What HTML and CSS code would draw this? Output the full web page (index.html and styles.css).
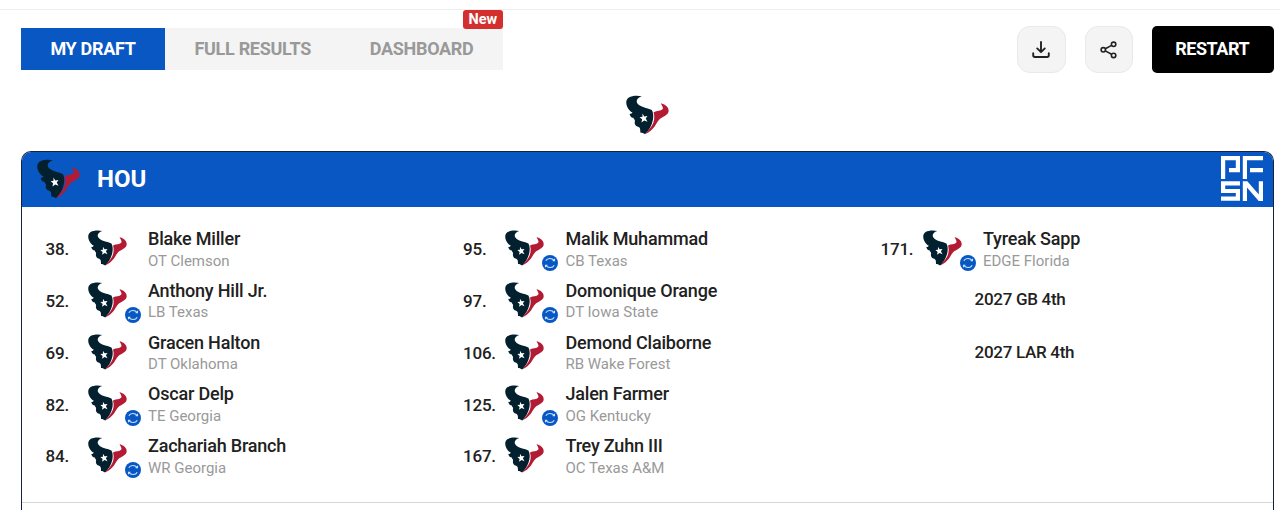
FILE: index.html
```html
<!DOCTYPE html>
<html lang="en">
<head>
    <meta charset="UTF-8">
    <meta name="viewport" content="width=device-width, initial-scale=1.0">
    <title>Mock Draft Results</title>
    <link rel="stylesheet" href="styles.css">
</head>
<body>
    <svg class="sprite" width="0" height="0">
        <symbol id="hou" viewBox="0 0 120 108">
            <path fill="#03202f" d="M44 2C32 -1 17 0 8 5C0 10 -1 20 3 30C7 39 12 44 18 47C16 50 14 51 10 51C12 58 16 62 21 62C21 66 25 67 25 71C23 77 25 84 32 86C40 89 40 92 40 103C45 103 49 105 53 108C63 98 72 84 75 68C77 57 76 47 72 40C60 34 46 33 36 26C26 19 28 7 44 2Z"/>
            <path fill="#b31b34" d="M97 21C101 29 105 34 102 38C97 43 87 42 77 46C81 60 79 73 72 84C67 92 60 99 54 107C64 103 73 95 80 86C86 77 90 68 97 63C107 58 118 53 119 43C120 32 108 23 97 21Z"/>
            <path fill="#fff" d="M46 50L51 58L60 57L55 64L60 73L51 69L43 75L45 66L38 60L46 59Z"/>
        </symbol>
        <symbol id="trade" viewBox="0 0 16 16">
            <circle cx="8" cy="8" r="8" fill="#0857c3"/>
            <path fill="none" stroke="#c5e5ff" stroke-width="1.1" d="M3.8 5.8C5.3 2.8 10 2.6 12.1 5.6M12.5 3.8V5.8H10.6M12.2 10.2C10.7 13.2 6 13.4 3.9 10.4M3.5 12.2V10.2H5.4"/>
        </symbol>
    </svg>

    <div class="top-line"></div>
    <div class="container">
        <div class="toolbar">
            <div class="tabs">
                <button class="tab active">MY DRAFT</button>
                <button class="tab">FULL RESULTS</button>
                <button class="tab">DASHBOARD<span class="new">New</span></button>
            </div>
            <div class="actions">
                <button class="icon-btn" aria-label="Download">
                    <svg width="18" height="18" viewBox="0 0 18 18" fill="none" stroke="#222" stroke-width="1.9" stroke-linecap="round" stroke-linejoin="round"><path d="M9 1V11M5.2 7.4L9 11.2L12.8 7.4M1.2 12.3V14.3Q1.2 16 2.9 16H15.1Q16.8 16 16.8 14.3V12.3"/></svg>
                </button>
                <button class="icon-btn" aria-label="Share">
                    <svg width="18" height="18" viewBox="0 0 18 18" fill="none" stroke="#222" stroke-width="1.6"><circle cx="3.3" cy="8.8" r="2.2"/><circle cx="13.6" cy="3.3" r="2.2"/><circle cx="13.6" cy="14.4" r="2.2"/><path d="M5.3 7.7L11.6 4.4M5.3 9.9L11.6 13.3"/></svg>
                </button>
                <button class="restart">RESTART</button>
            </div>
        </div>

        <div class="team-picker"><svg class="logo"><use href="#hou"/></svg></div>

        <div class="card">
            <div class="card-header">
                <svg class="logo"><use href="#hou"/></svg>
                <h2>HOU</h2>
                <svg class="brand" width="42" height="45" viewBox="0 0 42 45" fill="none" stroke="#fff" stroke-width="4.2">
                    <path d="M2.1 23V2.1H16.9V14.2H8M23.9 23V2.1H42M29 14.2H42"/>
                    <path d="M19 27.3H2.1V35H16.9V42.7H0M23.9 45V25.2M39.9 45V25.2M24.5 26.5L39.3 43.5"/>
                </svg>
            </div>
            <div class="picks">
                <div class="column">
                    <div class="pick">
                        <span class="number">38.</span>
                        <div class="team"><svg class="logo"><use href="#hou"/></svg></div>
                        <div class="player"><div class="name">Blake Miller</div><div class="school">OT Clemson</div></div>
                    </div>
                    <div class="pick">
                        <span class="number">52.</span>
                        <div class="team"><svg class="logo"><use href="#hou"/></svg><svg class="trade"><use href="#trade"/></svg></div>
                        <div class="player"><div class="name">Anthony Hill Jr.</div><div class="school">LB Texas</div></div>
                    </div>
                    <div class="pick">
                        <span class="number">69.</span>
                        <div class="team"><svg class="logo"><use href="#hou"/></svg></div>
                        <div class="player"><div class="name">Gracen Halton</div><div class="school">DT Oklahoma</div></div>
                    </div>
                    <div class="pick">
                        <span class="number">82.</span>
                        <div class="team"><svg class="logo"><use href="#hou"/></svg><svg class="trade"><use href="#trade"/></svg></div>
                        <div class="player"><div class="name">Oscar Delp</div><div class="school">TE Georgia</div></div>
                    </div>
                    <div class="pick">
                        <span class="number">84.</span>
                        <div class="team"><svg class="logo"><use href="#hou"/></svg><svg class="trade"><use href="#trade"/></svg></div>
                        <div class="player"><div class="name">Zachariah Branch</div><div class="school">WR Georgia</div></div>
                    </div>
                </div>
                <div class="column">
                    <div class="pick">
                        <span class="number">95.</span>
                        <div class="team"><svg class="logo"><use href="#hou"/></svg><svg class="trade"><use href="#trade"/></svg></div>
                        <div class="player"><div class="name">Malik Muhammad</div><div class="school">CB Texas</div></div>
                    </div>
                    <div class="pick">
                        <span class="number">97.</span>
                        <div class="team"><svg class="logo"><use href="#hou"/></svg><svg class="trade"><use href="#trade"/></svg></div>
                        <div class="player"><div class="name">Domonique Orange</div><div class="school">DT Iowa State</div></div>
                    </div>
                    <div class="pick">
                        <span class="number">106.</span>
                        <div class="team"><svg class="logo"><use href="#hou"/></svg></div>
                        <div class="player"><div class="name">Demond Claiborne</div><div class="school">RB Wake Forest</div></div>
                    </div>
                    <div class="pick">
                        <span class="number">125.</span>
                        <div class="team"><svg class="logo"><use href="#hou"/></svg><svg class="trade"><use href="#trade"/></svg></div>
                        <div class="player"><div class="name">Jalen Farmer</div><div class="school">OG Kentucky</div></div>
                    </div>
                    <div class="pick">
                        <span class="number">167.</span>
                        <div class="team"><svg class="logo"><use href="#hou"/></svg></div>
                        <div class="player"><div class="name">Trey Zuhn III</div><div class="school">OC Texas A&amp;M</div></div>
                    </div>
                </div>
                <div class="column">
                    <div class="pick">
                        <span class="number">171.</span>
                        <div class="team"><svg class="logo"><use href="#hou"/></svg><svg class="trade"><use href="#trade"/></svg></div>
                        <div class="player"><div class="name">Tyreak Sapp</div><div class="school">EDGE Florida</div></div>
                    </div>
                    <div class="future">2027 GB 4th</div>
                    <div class="future">2027 LAR 4th</div>
                </div>
            </div>
            <div class="card-footer"></div>
        </div>
    </div>
</body>
</html>
```

FILE: styles.css
```css
* {
    box-sizing: border-box;
}
body {
    font-family: Roboto, Arial, sans-serif;
    margin: 0;
    height: 510px;
    overflow: hidden;
    background-color: #fff;
    color: #212121;
}
svg {
    display: block;
}
.sprite {
    position: absolute;
}
.top-line {
    height: 10px;
    border-bottom: 1px solid #eee;
}
.container {
    padding: 16px 6.5px 0 21px;
}
button {
    font-family: inherit;
    border: none;
    padding: 0;
    cursor: pointer;
}
.toolbar {
    display: flex;
    justify-content: space-between;
    height: 47px;
}
.tabs {
    display: flex;
    height: 42px;
    margin-top: 2.4px;
}
.tab {
    position: relative;
    padding: 0 29.4px 2px;
    font-size: 18px;
    font-weight: 700;
    letter-spacing: -0.3px;
    background-color: #f4f4f4;
    color: #999;
}
.tab.active {
    background-color: #0857c3;
    color: #fff;
}
.new {
    position: absolute;
    top: -18px;
    right: 0;
    width: 40px;
    height: 19px;
    border-radius: 3px;
    background-color: #d32f2f;
    color: #fff;
    font-size: 14.5px;
    line-height: 19px;
    letter-spacing: 0;
}
.actions {
    display: flex;
    gap: 19px;
}
.icon-btn {
    display: flex;
    align-items: center;
    justify-content: center;
    width: 48.5px;
    height: 47px;
    border: 1px solid #e9e9e9;
    border-radius: 13px;
    background-color: #f4f4f4;
}
.restart {
    width: 121.5px;
    height: 47px;
    padding: 0 1px 2px 0;
    border-radius: 5px;
    background-color: #000;
    color: #fff;
    font-size: 18px;
    font-weight: 700;
    letter-spacing: -0.45px;
}
.team-picker {
    display: flex;
    justify-content: center;
    height: 78px;
    padding-top: 22px;
}
.team-picker .logo,
.card-header .logo {
    width: 43px;
    height: 40px;
}
.card {
    border: 1px solid #17233a;
    border-bottom: none;
    border-radius: 10px 10px 0 0;
    height: 380px;
    overflow: hidden;
}
.card-header {
    display: flex;
    align-items: center;
    height: 55px;
    padding: 0 10px 2px 15px;
    background-color: #0857c3;
    color: #fff;
}
.card-header h2 {
    margin: 0 0 0 17px;
    font-size: 24px;
    font-weight: 700;
}
.brand {
    margin-left: auto;
}
.picks {
    display: grid;
    grid-template-columns: repeat(3, 417.5px);
    height: 295px;
    padding: 17px 0 0 23.6px;
}
.pick {
    display: flex;
    height: 51.75px;
}
.number {
    width: 42px;
    padding-top: 14.3px;
    font-size: 17px;
    font-weight: 500;
    line-height: 22px;
    letter-spacing: -0.25px;
}
.team {
    position: relative;
    width: 60.4px;
    padding-top: 6px;
}
.team .logo {
    width: 39px;
    height: 36px;
}
.trade {
    position: absolute;
    left: 37.4px;
    top: 31px;
    width: 16px;
    height: 16px;
}
.player {
    padding-top: 4.2px;
}
.name {
    font-size: 18px;
    font-weight: 500;
    line-height: 21px;
    letter-spacing: -0.2px;
}
.school {
    padding-top: 1.5px;
    font-size: 15px;
    line-height: 20px;
    color: #999;
}
.future {
    height: 53.5px;
    padding: 12.2px 0 0 94px;
    font-size: 17px;
    font-weight: 500;
    line-height: 22px;
    letter-spacing: -0.3px;
}
.card-footer {
    border-top: 1px solid #d5d5d5;
}
```
